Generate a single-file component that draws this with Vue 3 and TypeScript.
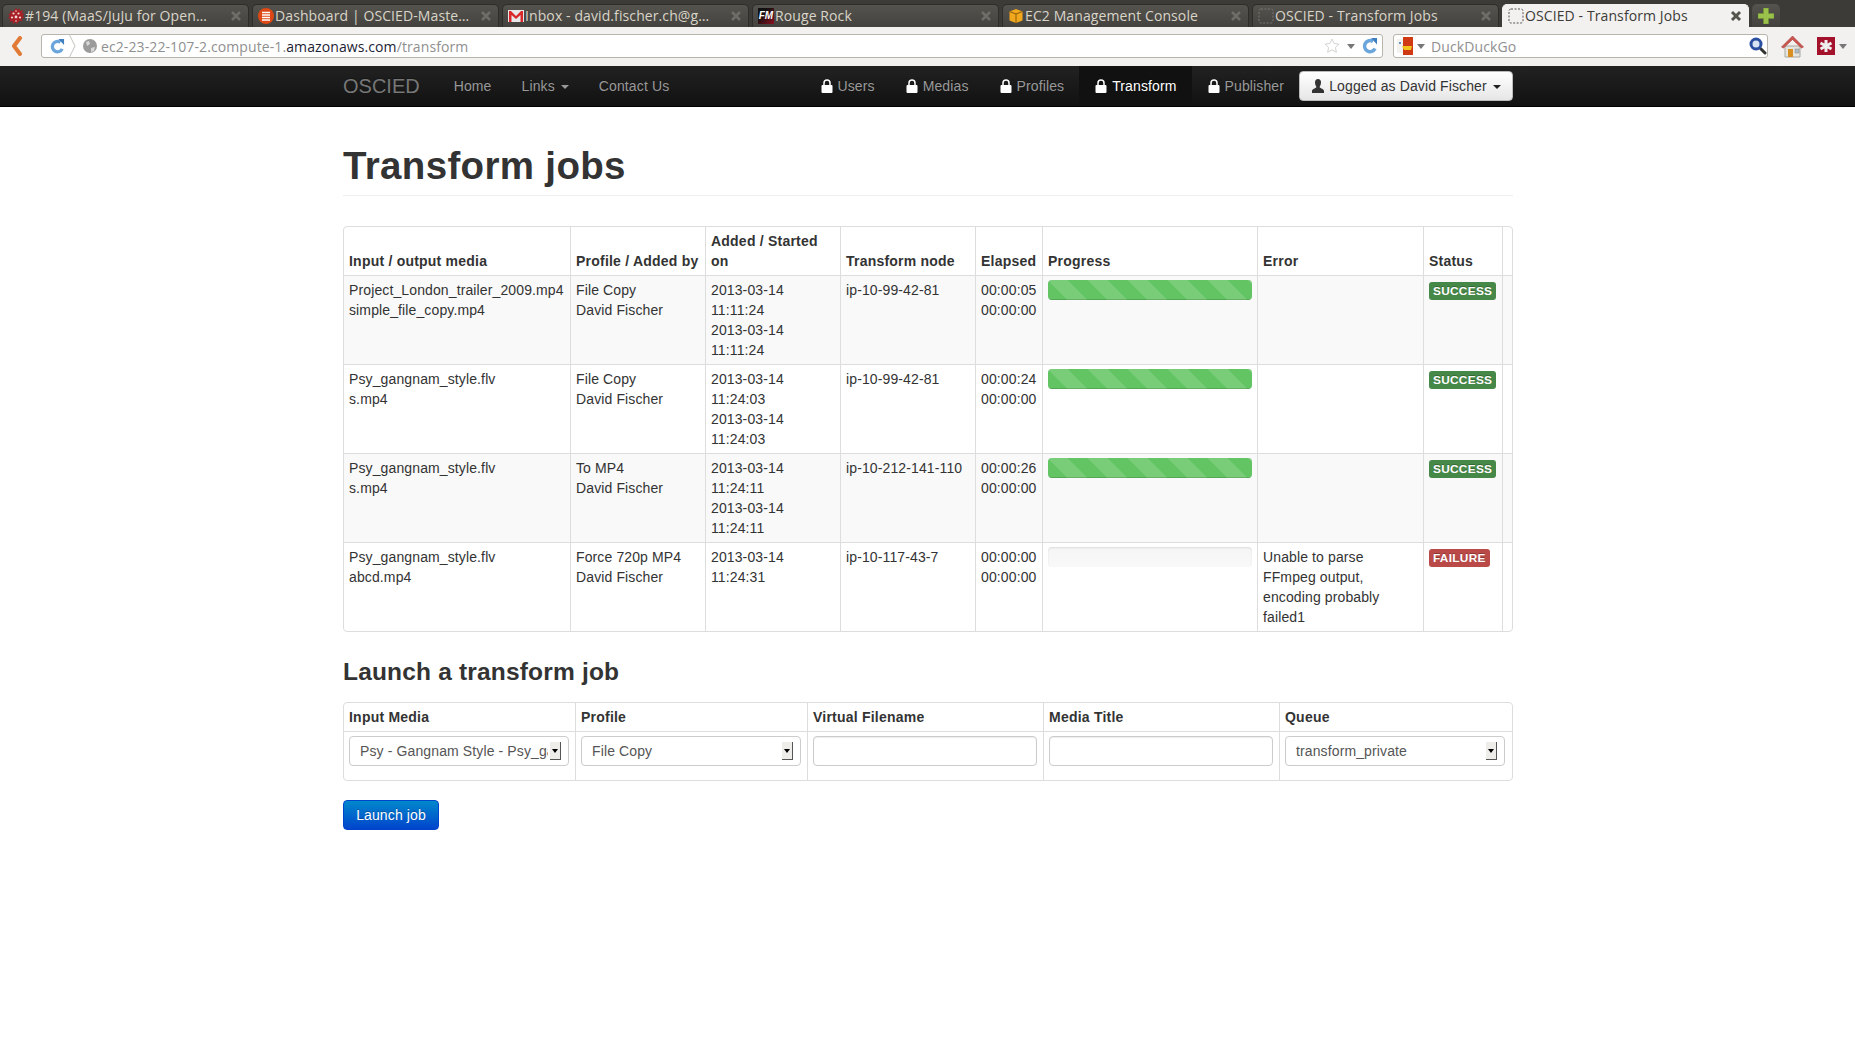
<script setup lang="ts">
interface BrowserTab {
  title: string
  icon: string
  active?: boolean
}

interface Job {
  input: string
  output: string
  profile: string
  dates: string[]
  node: string
  elapsed: string[]
  progress: number
  error: string
  status: string
}

const tabs: BrowserTab[] = [
  { title: '#194 (MaaS/JuJu for Open…', icon: 'paw' },
  { title: 'Dashboard | OSCIED-Maste…', icon: 'dash' },
  { title: 'Inbox - david.fischer.ch@g…', icon: 'mail' },
  { title: 'Rouge Rock', icon: 'rouge' },
  { title: 'EC2 Management Console', icon: 'cube' },
  { title: 'OSCIED - Transform Jobs', icon: 'blank' },
  { title: 'OSCIED - Transform Jobs', icon: 'blank', active: true }
]

const sections = [
  { label: 'Users' },
  { label: 'Medias' },
  { label: 'Profiles' },
  { label: 'Transform', active: true },
  { label: 'Publisher' }
]

const jobs: Job[] = [
  {
    input: 'Project_London_trailer_2009.mp4',
    output: 'simple_file_copy.mp4',
    profile: 'File Copy',
    dates: ['2013-03-14 11:11:24', '2013-03-14 11:11:24'],
    node: 'ip-10-99-42-81',
    elapsed: ['00:00:05', '00:00:00'],
    progress: 100,
    error: '',
    status: 'SUCCESS'
  },
  {
    input: 'Psy_gangnam_style.flv',
    output: 's.mp4',
    profile: 'File Copy',
    dates: ['2013-03-14 11:24:03', '2013-03-14 11:24:03'],
    node: 'ip-10-99-42-81',
    elapsed: ['00:00:24', '00:00:00'],
    progress: 100,
    error: '',
    status: 'SUCCESS'
  },
  {
    input: 'Psy_gangnam_style.flv',
    output: 's.mp4',
    profile: 'To MP4',
    dates: ['2013-03-14 11:24:11', '2013-03-14 11:24:11'],
    node: 'ip-10-212-141-110',
    elapsed: ['00:00:26', '00:00:00'],
    progress: 100,
    error: '',
    status: 'SUCCESS'
  },
  {
    input: 'Psy_gangnam_style.flv',
    output: 'abcd.mp4',
    profile: 'Force 720p MP4',
    dates: ['2013-03-14 11:24:31'],
    node: 'ip-10-117-43-7',
    elapsed: ['00:00:00', '00:00:00'],
    progress: 0,
    error: 'Unable to parse FFmpeg output, encoding probably failed1',
    status: 'FAILURE'
  }
]
</script>

<template>
  <div class="browser">
    <div class="tabstrip">
      <div v-for="tab in tabs" :key="tab.title + tab.active" class="tab" :class="{ active: tab.active }">
        <span class="favicon">
          <svg v-if="tab.icon === 'paw'" viewBox="0 0 16 16" width="16" height="16">
            <path d="M8 0l1.500 2 2-1.500.5 2.500 3-1-1 3 2.500 1-2 2 2 2-3 .5 1 3-3-1L9 16l-1.500-2-2.500 2-.5-3-3 1 1-3-2.500-1 2-2-2-2 3-.5-1-3 3 1L6.500 2z" fill="#a81f26" />
            <circle cx="5.500" cy="5.500" r="1.100" fill="#f3d6d6" />
            <circle cx="10.500" cy="5.500" r="1.100" fill="#f3d6d6" />
            <circle cx="4" cy="9.500" r="1.100" fill="#f3d6d6" />
            <circle cx="8" cy="9" r="1.400" fill="#f3d6d6" />
            <circle cx="12" cy="9.500" r="1.100" fill="#f3d6d6" />
            <circle cx="8" cy="3" r=".8" fill="#f3d6d6" />
            <circle cx="8" cy="13" r=".8" fill="#f3d6d6" />
          </svg>
          <svg v-else-if="tab.icon === 'dash'" viewBox="0 0 16 16" width="16" height="16">
            <circle cx="8" cy="8" r="8" fill="#dd4814" />
            <path d="M4 4.500h8M4 7h8M4 9.500h8M4 12h8" stroke="#fff" stroke-width="1.400" />
          </svg>
          <svg v-else-if="tab.icon === 'mail'" viewBox="0 0 16 16" width="16" height="16">
            <rect y="2" width="16" height="12" fill="#e8e8e8" />
            <path d="M1 14V3h2l5 5 5-5h2v11h-2.500V7L8 11 3.500 7v7z" fill="#d8282c" />
          </svg>
          <span v-else-if="tab.icon === 'rouge'" class="rouge">FM</span>
          <svg v-else-if="tab.icon === 'cube'" viewBox="0 0 16 16" width="16" height="16">
            <path d="M8 1l6.500 2.500v9L8 15l-6.500-2.500v-9z" fill="#f2a81d" />
            <path d="M1.500 3.500L8 6l6.500-2.500M8 6v9" fill="none" stroke="#8a5a0c" stroke-width="1" />
          </svg>
          <svg v-else viewBox="0 0 16 16" width="16" height="16">
            <rect x="1" y="1" width="14" height="14" rx="2" fill="none" stroke-dasharray="2 1.500" :stroke="tab.active ? '#555' : '#7a7870'" />
          </svg>
        </span>
        <span class="tab-title">{{ tab.title }}</span>
        <svg class="tab-close" viewBox="0 0 12 12" width="12" height="12">
          <path d="M2 2l8 8M10 2l-8 8" :stroke="tab.active ? '#55534e' : '#6f6d67'" :stroke-width="tab.active ? 3 : 2.500" />
        </svg>
      </div>
      <div class="tab-new">
        <svg viewBox="0 0 16 16" width="16" height="16">
          <path d="M5.500 0h5v5.500H16v5h-5.500V16h-5v-5.500H0v-5h5.500z" fill="#9ac14a" stroke="#6f9430" stroke-width=".5" />
        </svg>
      </div>
    </div>

    <div class="toolbar">
      <svg class="back" viewBox="0 0 12 20" width="12" height="20">
        <path d="M9 2L3 10l6 8" fill="none" stroke="#e07a35" stroke-width="4" stroke-linecap="round" stroke-linejoin="round" />
      </svg>
      <div class="urlbar">
        <svg viewBox="0 0 16 16" width="15" height="15">
          <path d="M13 10.500A5.500 5.500 0 1 1 11 3.500" fill="none" stroke="#6aa5dc" stroke-width="3.500" />
          <path d="M9 0h6v6.500z" fill="#3f7fc0" />
        </svg>
        <svg class="identity-sep" viewBox="0 0 8 24" width="8" height="24">
          <path d="M1 0l6 12-6 12" fill="none" stroke="#c4c2bc" />
        </svg>
        <svg viewBox="0 0 14 14" width="14" height="14">
          <circle cx="7" cy="7" r="7" fill="#9b9b9b" />
          <path d="M3 3l3-1 1 3-3 2zM8 9l4-1-1 4-3 1z" fill="#d8d8d8" />
        </svg>
        <div class="url"><span>ec2-23-22-107-2.compute-1.</span><b>amazonaws.com</b><span>/transform</span></div>
        <svg viewBox="0 0 16 16" width="16" height="16">
          <path d="M8 1l2.100 4.500 4.900.600-3.600 3.300 1 4.800L8 11.800l-4.400 2.400 1-4.800L1 6.100l4.900-.600z" fill="#fff" stroke="#d5d4d0" />
        </svg>
        <i class="mini-caret"></i>
        <svg viewBox="0 0 16 16" width="16" height="16">
          <path d="M13 10.500A5.500 5.500 0 1 1 11 3.500" fill="none" stroke="#6aa5dc" stroke-width="3.500" />
          <path d="M9 0h6v6.500z" fill="#3f7fc0" />
        </svg>
      </div>
      <div class="searchbar">
        <svg viewBox="0 0 17 18" width="17" height="18">
          <rect x="6" y="0" width="10" height="18" fill="#cf3a12" />
          <rect x="0" y="2" width="6" height="14" fill="#f4f2ee" />
          <path d="M5 9h10l-1 4H7z" fill="#f2c41c" />
          <circle cx="3" cy="6" r="1" fill="#3f6fb0" />
        </svg>
        <i class="mini-caret"></i>
        <div class="search-text">DuckDuckGo</div>
        <svg viewBox="0 0 18 18" width="18" height="18">
          <path d="M11.500 11.500L16 16" stroke="#333" stroke-width="3" stroke-linecap="round" />
          <circle cx="7" cy="7" r="5" fill="#d8e4f4" stroke="#2a4ea0" stroke-width="3" />
        </svg>
      </div>
      <svg class="home" viewBox="0 0 23 23" width="23" height="23">
        <path d="M4 11h15v11H4z" fill="#e6e4de" stroke="#a8a69f" />
        <path d="M0.500 12L11.500 1l11 11-2 1-9-8.500-9 8.500z" fill="#cc5550" stroke="#a83a36" stroke-width=".6" />
        <rect x="7" y="14" width="5" height="8" fill="#d88f1f" />
        <rect x="14" y="14" width="4" height="4" fill="#b0bcc4" stroke="#888" stroke-width=".5" />
      </svg>
      <div class="addon">
        <svg viewBox="0 0 18 18" width="18" height="18">
          <rect width="18" height="18" fill="#a3122a" />
          <path d="M9 3v12M3.500 6L14.500 12M14.500 6L3.500 12" stroke="#eee" stroke-width="3" />
        </svg>
        <i class="mini-caret"></i>
      </div>
    </div>

    <nav class="navbar">
      <div class="container nav-inner">
        <a class="brand">OSCIED</a>
        <a class="nav-link">Home</a>
        <a class="nav-link">Links <i class="caret"></i></a>
        <a class="nav-link">Contact Us</a>
        <div class="nav-right">
          <a v-for="item in sections" :key="item.label" class="nav-link" :class="{ active: item.active }">
            <svg class="lock" viewBox="0 0 14 14" width="14" height="14">
              <path d="M4 6V4a3 3 0 0 1 6 0v2" fill="none" stroke="#fff" stroke-width="1.500" />
              <rect x="1.500" y="6" width="11" height="8" rx="1" fill="#fff" />
            </svg>{{ item.label }}
          </a>
          <button class="btn-user">
            <svg class="user" viewBox="0 0 14 14" width="14" height="14">
              <path d="M7 0c2 0 3 1.500 3 3.500S9 7 8.500 8c1 1.500 4.500 2 4.500 4v2H1v-2c0-2 3.500-2.500 4.500-4C5 7 4 5.500 4 3.500S5 0 7 0z" fill="#333" />
            </svg>
            Logged as David Fischer
            <i class="caret dark"></i>
          </button>
        </div>
      </div>
    </nav>

    <main class="container">
      <div class="page-header">
        <h1>Transform jobs</h1>
      </div>

      <table class="grid jobs">
        <colgroup>
          <col class="c-media" />
          <col class="c-std" />
          <col class="c-std" />
          <col class="c-std" />
          <col class="c-elapsed" />
          <col class="c-progress" />
          <col class="c-error" />
          <col class="c-status" />
          <col />
        </colgroup>
        <thead>
          <tr>
            <th>Input / output media</th>
            <th>Profile / Added by</th>
            <th>Added / Started on</th>
            <th>Transform node</th>
            <th>Elapsed</th>
            <th>Progress</th>
            <th>Error</th>
            <th>Status</th>
            <th></th>
          </tr>
        </thead>
        <tbody>
          <tr v-for="job in jobs" :key="job.input + job.output + job.profile">
            <td>{{ job.input }}<br />{{ job.output }}</td>
            <td>{{ job.profile }}<br />David Fischer</td>
            <td><div v-for="(date, i) in job.dates" :key="i">{{ date }}</div></td>
            <td>{{ job.node }}</td>
            <td>{{ job.elapsed[0] }}<br />{{ job.elapsed[1] }}</td>
            <td>
              <div class="progress">
                <div class="bar" :style="{ width: job.progress + '%' }"></div>
              </div>
            </td>
            <td>{{ job.error }}</td>
            <td><span class="label" :class="job.status === 'SUCCESS' ? 'ok' : 'ko'">{{ job.status }}</span></td>
            <td></td>
          </tr>
        </tbody>
      </table>

      <h3>Launch a transform job</h3>

      <table class="grid launch">
        <colgroup>
          <col class="f-a" />
          <col class="f-b" />
          <col class="f-c" />
          <col class="f-c" />
          <col />
        </colgroup>
        <thead>
          <tr>
            <th>Input Media</th>
            <th>Profile</th>
            <th>Virtual Filename</th>
            <th>Media Title</th>
            <th>Queue</th>
          </tr>
        </thead>
        <tbody>
          <tr>
            <td>
              <div class="select-wrap">
                <select><option>Psy - Gangnam Style - Psy_gangnam_style.flv</option></select>
                <span class="gtk-arrow"></span>
              </div>
            </td>
            <td>
              <div class="select-wrap">
                <select><option>File Copy</option></select>
                <span class="gtk-arrow"></span>
              </div>
            </td>
            <td><input type="text" /></td>
            <td><input type="text" /></td>
            <td>
              <div class="select-wrap">
                <select><option>transform_private</option></select>
                <span class="gtk-arrow"></span>
              </div>
            </td>
          </tr>
        </tbody>
      </table>

      <button class="btn-primary">Launch job</button>
    </main>
  </div>
</template>

<style>
body {
  background: #fff;
}
</style>

<style scoped>
.browser {
  font-family: "Liberation Sans", Arial, sans-serif;
  font-size: 14px;
  line-height: 20px;
  letter-spacing: 0.12px;
  color: #333;
}

/* browser chrome */
.tabstrip {
  display: flex;
  gap: 3px;
  height: 27px;
  padding: 4px 0 0 2px;
  box-sizing: border-box;
  background: #3c3b37;
  font-family: "Open Sans", sans-serif;
  font-size: 14px;
  letter-spacing: 0.1px;
}

.tab {
  display: flex;
  align-items: center;
  width: 247px;
  padding: 0 6px 0 5px;
  box-sizing: border-box;
  background: linear-gradient(#55534e, #44423e);
  border: 1px solid #2e2d2a;
  border-bottom: 0;
  border-radius: 5px 5px 0 0;
  color: #d9d5c9;
}

.tab.active {
  background: #f2f1f0;
  border-color: #f2f1f0;
  color: #3c3b37;
}

.favicon {
  display: flex;
  width: 16px;
  height: 16px;
  margin-right: 1px;
  flex-shrink: 0;
}

.rouge {
  width: 16px;
  height: 16px;
  background: linear-gradient(135deg, #111 30%, #8c1020);
  color: #fff;
  font: italic bold 10px/16px "Liberation Sans", sans-serif;
  letter-spacing: 0;
  text-align: center;
}

.tab-title {
  flex: 1;
  white-space: nowrap;
  overflow: hidden;
}

.tab-new {
  display: flex;
  align-items: center;
  justify-content: center;
  width: 28px;
  background: linear-gradient(#55534e, #44423e);
  border-radius: 5px 5px 0 0;
}

.toolbar {
  display: flex;
  align-items: center;
  height: 39px;
  padding: 0 0 1px 11px;
  box-sizing: border-box;
  background: #f2f1f0;
  font-family: "Open Sans", sans-serif;
  font-size: 14px;
  letter-spacing: 0.1px;
}

.back {
  margin-right: 18px;
}

.urlbar,
.searchbar {
  display: flex;
  align-items: center;
  height: 24px;
  box-sizing: border-box;
  background: #fff;
  border: 1px solid #b8b5ad;
  border-radius: 3px;
}

.urlbar {
  width: 1342px;
  padding: 0 4px 0 8px;
}

.identity-sep {
  margin: 0 7px 0 3px;
}

.url {
  flex: 1;
  margin-left: 4px;
  padding-top: 1px;
  color: #8f8f8f;
  white-space: nowrap;
}

.url b {
  font-weight: 400;
  color: #1c2333;
}

.mini-caret {
  width: 0;
  height: 0;
  margin: 0 7px;
  border-style: solid;
  border-width: 5px 4px 0;
  border-color: #777 transparent transparent;
}

.searchbar {
  width: 375px;
  margin-left: 10px;
  padding: 0 0 0 3px;
}

.searchbar .mini-caret {
  margin: 0 6px 0 3px;
}

.search-text {
  flex: 1;
  padding-top: 1px;
  color: #8f8f8f;
}

.home {
  margin-left: 13px;
}

.addon {
  display: flex;
  align-items: center;
  margin-left: 13px;
}

.addon .mini-caret {
  margin: 0 0 0 4px;
}

/* bootstrap style page */
.container {
  width: 1170px;
  margin-left: 343px;
}

.navbar {
  height: 41px;
  box-sizing: border-box;
  background: linear-gradient(#222, #111);
  border-bottom: 1px solid #000;
}

.nav-inner {
  display: flex;
  align-items: center;
  height: 40px;
}

.brand {
  margin-right: 19px;
  font-size: 20px;
  font-weight: 200;
  letter-spacing: 0;
  color: #777;
  text-shadow: 0 -1px 0 rgba(0, 0, 0, 0.25);
}

.nav-link {
  display: block;
  padding: 10px 15px;
  color: #999;
  text-shadow: 0 -1px 0 rgba(0, 0, 0, 0.25);
}

.nav-link.active {
  background: #111;
  color: #fff;
}

.nav-right {
  display: flex;
  align-items: center;
  margin-left: auto;
}

.lock {
  margin-right: 4px;
  vertical-align: -2px;
}

.caret {
  display: inline-block;
  width: 0;
  height: 0;
  margin-left: 2px;
  vertical-align: 2px;
  border-style: solid;
  border-width: 4px 4px 0;
  border-color: #999 transparent transparent;
}

.caret.dark {
  border-color: #222 transparent transparent;
}

.btn-user {
  width: 214px;
  height: 30px;
  padding: 0;
  border: 1px solid #bbb;
  border-radius: 4px;
  background: linear-gradient(#fff, #e6e6e6);
  font: inherit;
  letter-spacing: inherit;
  color: #333;
  white-space: nowrap;
}

.user {
  vertical-align: -2px;
}

.page-header {
  margin: 39px 0 30px;
  padding-bottom: 9px;
  border-bottom: 1px solid #eee;
}

h1 {
  margin: 0;
  font-size: 38.5px;
  line-height: 40px;
  font-weight: 700;
  letter-spacing: 0.34px;
  color: #333;
}

h3 {
  margin: 20px 0 10px;
  font-size: 24.5px;
  line-height: 40px;
  font-weight: 700;
  letter-spacing: 0.18px;
  color: #333;
}

.grid {
  width: 1170px;
  table-layout: fixed;
  border-collapse: separate;
  border-spacing: 0;
  border: 1px solid #ddd;
  border-radius: 4px;
}

.grid th,
.grid td {
  padding: 4px 5px;
  text-align: left;
  vertical-align: top;
  border-left: 1px solid #ddd;
  border-top: 1px solid #ddd;
}

.grid th {
  vertical-align: bottom;
  border-top: 0;
  font-weight: 700;
  letter-spacing: 0.22px;
}

.grid th:first-child,
.grid td:first-child {
  border-left: 0;
}

.jobs {
  margin-bottom: 20px;
}

.jobs tbody tr:nth-child(odd) td {
  background: #f9f9f9;
}

.jobs tbody tr:last-child td:first-child {
  border-bottom-left-radius: 4px;
}

.c-media {
  width: 226px;
}

.c-std {
  width: 135px;
}

.c-elapsed {
  width: 67px;
}

.c-progress {
  width: 215px;
}

.c-error {
  width: 166px;
}

.c-status {
  width: 79px;
}

.f-a {
  width: 231px;
}

.f-b {
  width: 232px;
}

.f-c {
  width: 236px;
}

.progress {
  height: 20px;
  overflow: hidden;
  border-radius: 4px;
  background: linear-gradient(#f5f5f5, #f9f9f9);
  box-shadow: inset 0 1px 2px rgba(0, 0, 0, 0.1);
}

.bar {
  height: 100%;
  background-color: #62c462;
  background-image: linear-gradient(45deg, rgba(255, 255, 255, 0.15) 25%, transparent 25%, transparent 50%, rgba(255, 255, 255, 0.15) 50%, rgba(255, 255, 255, 0.15) 75%, transparent 75%, transparent);
  background-size: 40px 40px;
  box-shadow: inset 0 -1px 0 rgba(0, 0, 0, 0.15);
}

.label {
  display: inline-block;
  padding: 2px 4px;
  border-radius: 3px;
  font-size: 11.844px;
  font-weight: 700;
  line-height: 14px;
  letter-spacing: 0.3px;
  color: #fff;
  vertical-align: baseline;
  text-shadow: 0 -1px 0 rgba(0, 0, 0, 0.25);
}

.label.ok {
  background: #468847;
}

.label.ko {
  background: #b94a48;
}

.launch td {
  padding-bottom: 14px;
}

.select-wrap {
  position: relative;
  width: 220px;
  height: 30px;
}

select,
input {
  display: block;
  height: 30px;
  box-sizing: border-box;
  margin: 0;
  border: 1px solid #ccc;
  border-radius: 4px;
  background: #fff;
  font: inherit;
  letter-spacing: inherit;
  color: #555;
}

select {
  width: 220px;
  padding: 0 20px 0 10px;
  appearance: none;
}

input {
  width: 224px;
  padding: 4px 6px;
  box-shadow: inset 0 1px 1px rgba(0, 0, 0, 0.075);
}

.gtk-arrow {
  position: absolute;
  top: 6px;
  right: 8px;
  width: 11px;
  height: 18px;
  box-sizing: border-box;
  background: #efedea;
  border-right: 1px solid #555;
  border-bottom: 1px solid #555;
}

.gtk-arrow::after {
  content: "";
  position: absolute;
  top: 7px;
  left: 2px;
  border-style: solid;
  border-width: 4px 3px 0;
  border-color: #000 transparent transparent;
}

.btn-primary {
  display: block;
  width: 96px;
  height: 30px;
  margin-top: 19px;
  padding: 0;
  border: 1px solid #0044cc;
  border-radius: 4px;
  background: linear-gradient(#0088cc, #0044cc);
  font: inherit;
  letter-spacing: inherit;
  color: #fff;
  text-shadow: 0 -1px 0 rgba(0, 0, 0, 0.25);
}
</style>
